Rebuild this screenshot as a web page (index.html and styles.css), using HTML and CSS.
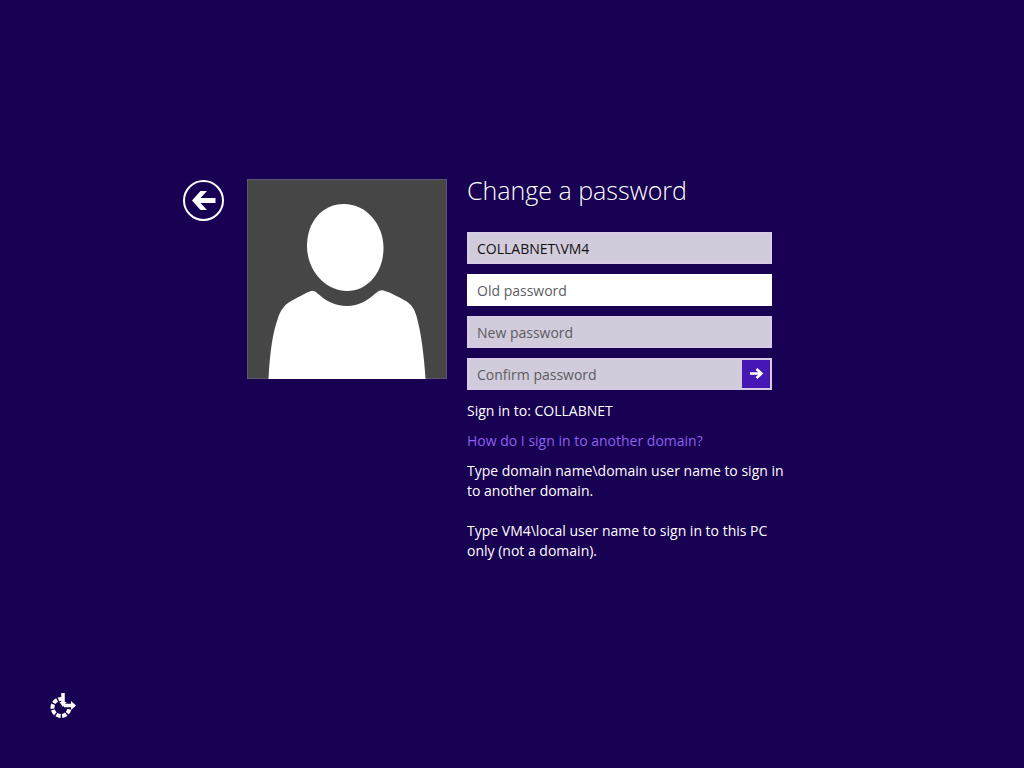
FILE: index.html
```html
<!DOCTYPE html>
<html lang="en">
<head>
  <meta charset="UTF-8">
  <title>Change a password</title>
  <link rel="stylesheet" href="styles.css">
</head>
<body>

  <main class="login">
    <button class="back" type="button" aria-label="Back">
      <svg viewBox="0 0 42 42" width="42" height="42">
        <circle cx="21.500" cy="21.500" r="19.500" fill="none" stroke="#fff" stroke-width="2"/>
        <path d="M10 21.500L18.500 12H25L18.500 19H33.500V24H18.500L25 31H18.500Z" fill="#fff"/>
      </svg>
    </button>

    <svg class="avatar" viewBox="0 0 200 200" width="200" height="200" role="img" aria-label="User picture">
      <rect x="0.500" y="0.500" width="199" height="199" fill="#464646" stroke="#5c5470"/>
      <path d="M97 25C119 25 136.500 45 136.500 69C136.500 93 121 112 100 112C78 112 60 91 60 67C60 43 75 25 97 25Z" fill="#fff"/>
      <path d="M21.500 200C23 171 26 153 31 139C34 130 38 125 46 121C52 118 58 114 64 112Q67 111 70 114C79 122 88 127 100 127C112 127 121 121 129 114Q133 110 138 112C145 114 151 118 157 121C165 125 168 131 170 139C174 154 177 175 178.500 200Z" fill="#fff"/>
    </svg>

    <form class="panel">
      <h1>Change a password</h1>
      <input class="field user" type="text" value="COLLABNET\VM4" aria-label="User name">
      <input class="field old" type="password" placeholder="Old password" aria-label="Old password">
      <input class="field" type="password" placeholder="New password" aria-label="New password">
      <div class="confirm">
        <input class="field" type="password" placeholder="Confirm password" aria-label="Confirm password">
        <button class="submit" type="submit" aria-label="Submit">
          <svg viewBox="0 0 28 28" width="28" height="28">
            <path d="M8 13.500H19.500M14.500 9L19.500 13.500L14.500 18" fill="none" stroke="#fff" stroke-width="2.500"/>
          </svg>
        </button>
      </div>
      <p>Sign in to: COLLABNET</p>
      <p><a href="#">How do I sign in to another domain?</a></p>
      <p>Type domain name\domain user name to sign in<br>to another domain.</p>
      <p class="local">Type VM4\local user name to sign in to this PC<br>only (not a domain).</p>
    </form>
  </main>

  <footer>
    <button class="ease" type="button" aria-label="Ease of access">
      <svg viewBox="0 0 26 26" width="26" height="26">
        <!-- dashed ring, open at the top right -->
        <circle cx="11" cy="14.500" r="8.500" fill="none" stroke="#fff" stroke-width="4" stroke-dasharray="4.500 1.400 4.500 1.400 4.500 1.400 4.500 1.400 4.500 1.400 4.500 1.400 4.500 20" transform="rotate(12 11 14.500)"/>
        <path d="M13 0V10M14 12.500H22" fill="none" stroke="#fff" stroke-width="3.500"/>
        <path d="M9.500 9H16.500L13 14ZM21 8L26 12.500L21 17Z" fill="#fff"/>
      </svg>
    </button>
  </footer>

</body>
</html>
```

FILE: styles.css
```css
* {
  box-sizing: border-box;
}
body {
  margin: 0;
  min-height: 100vh;
  display: flex;
  flex-direction: column;
  background: #180052;
  color: #fff;
  font-family: "Open Sans", "Noto Sans", sans-serif;
  font-size: 14px;
  line-height: 20px;
}
button {
  padding: 0;
  border: none;
  background: none;
  cursor: pointer;
}
svg {
  display: block;
}
.login {
  flex: 1;
  display: flex;
  justify-content: center;
  align-items: flex-start;
  padding: 179px 55px 20px 0;
}
.back {
  margin-right: 23px;
}
.avatar {
  flex: none;
  margin-right: 20px;
}
.panel {
  width: 320px;
}
h1 {
  margin: 0 0 31px;
  font-size: 25px;
  font-weight: 300;
  line-height: 22px;
}
.field {
  display: block;
  width: 305px;
  height: 32px;
  margin-bottom: 10px;
  padding: 0 8px;
  border: 2px solid #d8cce4;
  border-radius: 0;
  outline: none;
  background: #d1cbdc;
  color: #111;
  font: inherit;
}
.field::placeholder {
  color: #5c5c62;
  opacity: 1;
}
.old {
  background: #fff;
  border-color: #fff;
}
.confirm {
  display: flex;
  width: 305px;
  height: 32px;
  margin-bottom: 11px;
  border: 2px solid #d8cce4;
}
.confirm .field {
  flex: 1;
  min-width: 0;
  height: 28px;
  margin: 0;
  border: none;
}
.submit {
  width: 28px;
  background: #4617b4;
}
p {
  margin: 0 0 10px;
}
a {
  color: #8c62f0;
  text-decoration: none;
}
.local {
  margin-top: 20px;
}
.ease {
  display: block;
}
footer {
  padding: 0 50px 49px;
}
```
